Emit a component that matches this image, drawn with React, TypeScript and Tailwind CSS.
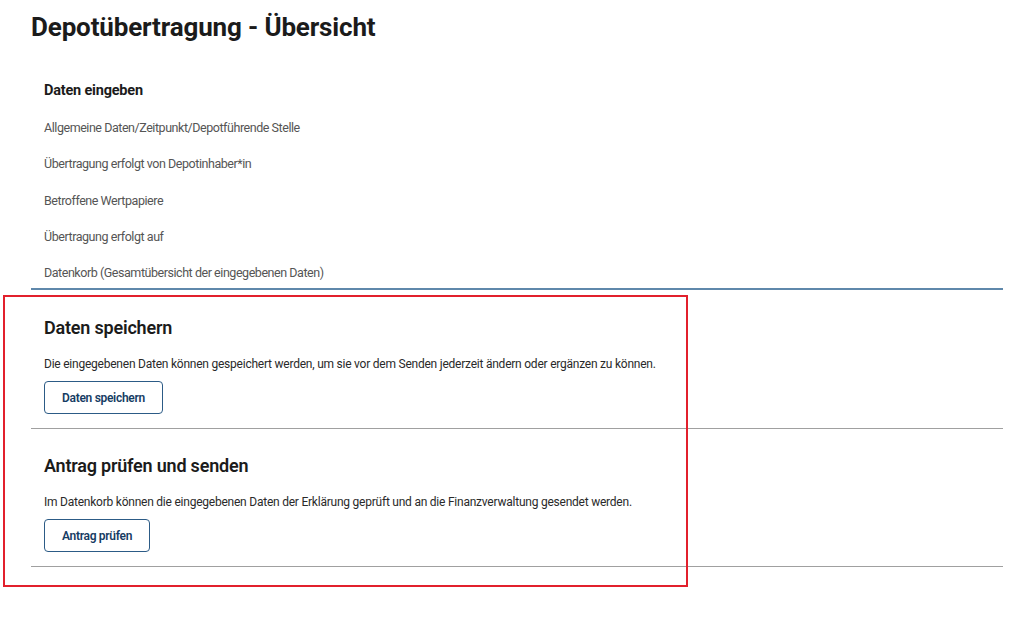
import * as React from "react";

const steps = [
  "Allgemeine Daten/Zeitpunkt/Depotführende Stelle",
  "Übertragung erfolgt von Depotinhaber*in",
  "Betroffene Wertpapiere",
  "Übertragung erfolgt auf",
  "Datenkorb (Gesamtübersicht der eingegebenen Daten)",
];

function ActionSection({ title, text, button }: { title: string; text: string; button: string }) {
  return (
    <section className="border-b border-[#a0a0a0] pl-[13px] pt-[25px] pb-[14px]">
      <h2 className="text-[18px] leading-[24px] font-semibold text-[#1b1b1b] tracking-[-0.2px]">{title}</h2>
      <p className="mt-[15px] text-[12px] leading-[18px] text-[#2a2a2a] tracking-[-0.23px]">{text}</p>
      <button className="mt-[8px] h-[33px] px-[17px] rounded-[4px] border border-[#2c5b86] text-[12px] font-semibold text-[#163c63] tracking-[-0.3px] bg-white">
        {button}
      </button>
    </section>
  );
}

export default function App() {
  return (
    <div className="relative min-h-[623px] w-[1024px] bg-white font-['Roboto',sans-serif]">
      <div className="pl-[31px] pr-[21px] pt-[11px]">
        <h1 className="text-[26px] leading-[32px] font-bold text-[#1b1b1b] tracking-[-0.15px]">
          Depotübertragung - Übersicht
        </h1>
        <nav className="mt-[38px] border-b-2 border-[#5f88ab]">
          <h3 className="pl-[13px] text-[14.5px] leading-[20px] font-bold text-[#1b1b1b] tracking-[-0.2px]">Daten eingeben</h3>
          <ul className="mt-[6px]">
            {steps.map((s) => (
              <li key={s} className="pl-[13px] h-[36.25px] pt-[12px] leading-[18px] text-[12.5px] text-[#555] tracking-[-0.45px]">
                {s}
              </li>
            ))}
          </ul>
        </nav>
        <div className="pt-[1px]">
          <ActionSection
            title="Daten speichern"
            text="Die eingegebenen Daten können gespeichert werden, um sie vor dem Senden jederzeit ändern oder ergänzen zu können."
            button="Daten speichern"
          />
          <ActionSection
            title="Antrag prüfen und senden"
            text="Im Datenkorb können die eingegebenen Daten der Erklärung geprüft und an die Finanzverwaltung gesendet werden."
            button="Antrag prüfen"
          />
        </div>
      </div>
      <div className="absolute left-[3px] top-[295px] w-[685px] h-[292px] border-2 border-[#e2202c] pointer-events-none" />
    </div>
  );
}
